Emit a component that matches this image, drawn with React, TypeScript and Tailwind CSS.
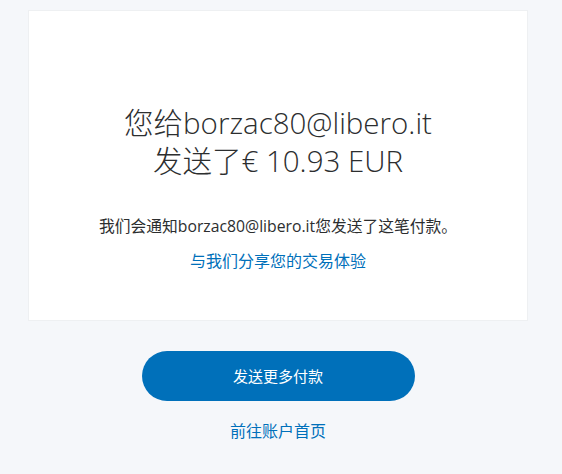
import React from 'react';

const font = { fontFamily: '"Open Sans", "Noto Sans CJK SC", sans-serif' };

export default function App() {
  return (
    <div className="min-h-[474px] w-full bg-[#f5f7fa] pt-[10px]" style={font}>
      <div className="ml-[28px] w-[500px]">
        <div className="flex h-[311px] flex-col items-center border border-[#eef0f2] bg-white pt-[93px] text-center">
          <h1 className="text-[29.5px] font-light leading-[38px] text-[#2c2e2f]">
            您给borzac80@libero.it
            <br />
            发送了€ 10.93 EUR
          </h1>
          <p className="mt-[36px] text-[15.75px] leading-[20px] text-[#2c2e2f]">
            我们会通知borzac80@libero.it您发送了这笔付款。
          </p>
          <a className="mt-[15px] text-[16px] leading-[20px] text-[#0070ba]" href="#">
            与我们分享您的交易体验
          </a>
        </div>
        <div className="flex flex-col items-center pt-[30px]">
          <button className="h-[50px] w-[273px] rounded-full bg-[#0070ba] text-[15px] text-white">
            发送更多付款
          </button>
          <a className="mt-[20px] text-[16px] leading-[20px] text-[#0070ba]" href="#">
            前往账户首页
          </a>
        </div>
      </div>
    </div>
  );
}
